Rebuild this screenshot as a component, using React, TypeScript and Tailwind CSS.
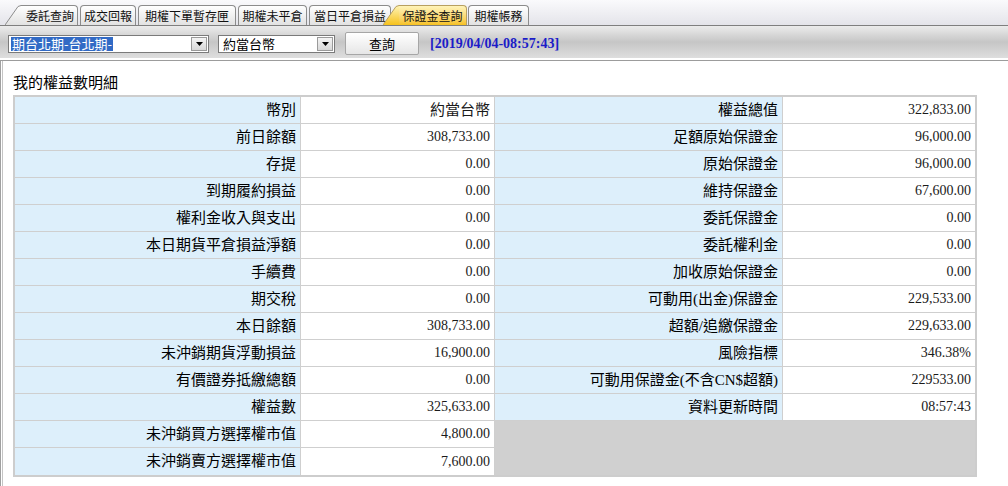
import React from 'react'

const cjk = { fontFamily: '"Liberation Serif", "Noto Sans CJK TC", serif' }
const ui = { fontFamily: '"Noto Sans CJK TC", "Liberation Sans", sans-serif' }

type Row = { l: string; lv: string; r?: string; rv?: string }

const rows: Row[] = [
  { l: '幣別', lv: '約當台幣', r: '權益總值', rv: '322,833.00' },
  { l: '前日餘額', lv: '308,733.00', r: '足額原始保證金', rv: '96,000.00' },
  { l: '存提', lv: '0.00', r: '原始保證金', rv: '96,000.00' },
  { l: '到期履約損益', lv: '0.00', r: '維持保證金', rv: '67,600.00' },
  { l: '權利金收入與支出', lv: '0.00', r: '委託保證金', rv: '0.00' },
  { l: '本日期貨平倉損益淨額', lv: '0.00', r: '委託權利金', rv: '0.00' },
  { l: '手續費', lv: '0.00', r: '加收原始保證金', rv: '0.00' },
  { l: '期交稅', lv: '0.00', r: '可動用(出金)保證金', rv: '229,533.00' },
  { l: '本日餘額', lv: '308,733.00', r: '超額/追繳保證金', rv: '229,633.00' },
  { l: '未沖銷期貨浮動損益', lv: '16,900.00', r: '風險指標', rv: '346.38%' },
  { l: '有價證券抵繳總額', lv: '0.00', r: '可動用保證金(不含CN$超額)', rv: '229533.00' },
  { l: '權益數', lv: '325,633.00', r: '資料更新時間', rv: '08:57:43' },
  { l: '未沖銷買方選擇權市值', lv: '4,800.00' },
  { l: '未沖銷賣方選擇權市值', lv: '7,600.00' },
]

const tabs = [
  { label: '委託查詢', w: 'w-[57px]' },
  { label: '成交回報', w: 'w-[56px]' },
  { label: '期權下單暫存匣', w: 'w-[98px]' },
  { label: '期權未平倉', w: 'w-[69px]' },
  { label: '當日平倉損益', w: 'w-[82px]' },
]

const Slant = ({ active }: { active?: boolean }) => (
  <svg width="16" height="20" viewBox="0 0 16 20" className="block shrink-0">
    <defs>
      <linearGradient id={active ? 'ga' : 'gi'} x1="0" y1="0" x2="0" y2="1">
        <stop offset="0" stopColor={active ? '#fff4b8' : '#ffffff'} />
        <stop offset="1" stopColor={active ? '#f6c21c' : '#e2e2e2'} />
      </linearGradient>
    </defs>
    <polygon points="0,20 13,1.5 16,0.5 16,20" fill={`url(#${active ? 'ga' : 'gi'})`} />
    <polyline points="0,20 13,1.5 16,0.5" fill="none" stroke={active ? '#b8a060' : '#8c8c8c'} strokeWidth="1" />
  </svg>
)

const Combo = ({ w, children }: { w: string; children: React.ReactNode }) => (
  <div className={`${w} h-[18px] flex items-stretch border border-[#7a7a7a] bg-white`}>
    <div className="flex-1 flex items-center pl-[2px] overflow-hidden text-[13px] leading-none whitespace-nowrap" style={ui}>
      {children}
    </div>
    <div className="w-[16px] m-[1px] flex items-center justify-center bg-gradient-to-b from-[#f4f4f4] to-[#d8d8d8] border border-[#9a9a9a]">
      <svg width="7" height="4" viewBox="0 0 7 4"><polygon points="0,0 7,0 3.5,4" fill="#000" /></svg>
    </div>
  </div>
)

export default function App() {
  return (
    <div className="w-[1008px] h-[486px] bg-white overflow-hidden text-black">
      {/* tab strip */}
      <div className="h-[26px] border-b border-[#7f7f7f] bg-gradient-to-b from-[#fafafc] to-[#e4e4ea] flex items-end pl-[5px]" style={ui}>
        {tabs.map((t, i) => (
          <div key={t.label} className={`flex items-end h-[20px] ${i === 0 ? '' : 'ml-[2px]'}`}>
            {i === 0 && <Slant />}
            <div
              className={`${t.w} h-[20px] flex items-center ${i === 0 ? 'pl-[5px] border-l-0 rounded-tl-none' : 'justify-center'} border border-b-0 border-[#8c8c8c] rounded-t-[4px] bg-gradient-to-b from-white to-[#e2e2e2] text-[12px] leading-none text-[#111]`}
            >
              {t.label}
            </div>
          </div>
        ))}
        <div className="relative z-10 flex items-end h-[20px] -ml-[8px]">
          <Slant active />
          <div className="w-[68px] h-[20px] flex items-center justify-center border border-b-0 border-l-0 border-[#b8a060] rounded-tr-[4px] bg-gradient-to-b from-[#fff4b8] to-[#f6c21c] text-[12px] leading-none text-[#111]">
            保證金查詢
          </div>
        </div>
        <div className="ml-[1px] w-[61px] h-[20px] flex items-center justify-center border border-b-0 border-[#8c8c8c] rounded-t-[4px] bg-gradient-to-b from-white to-[#e2e2e2] text-[12px] leading-none text-[#111]">
          期權帳務
        </div>
      </div>

      {/* toolbar */}
      <div className="h-[32px] pt-[3px] flex items-center bg-gradient-to-b from-[#ececec] via-[#c6c6c6] to-[#dedede]">
        <div className="ml-[8px]">
          <Combo w="w-[201px]">
            <span className="bg-[#316ac5] text-white px-[1px] h-[14px] flex items-center">期台北期-台北期-</span>
          </Combo>
        </div>
        <div className="ml-[9px]">
          <Combo w="w-[117px]">
            <span className="pl-[2px]">約當台幣</span>
          </Combo>
        </div>
        <button
          className="ml-[10px] w-[74px] h-[23px] flex items-center justify-center border border-[#a6a6a6] rounded-[2px] bg-gradient-to-b from-white to-[#e6e6e6] text-[13px] leading-none"
          style={ui}
        >
          查詢
        </button>
        <div className="ml-[11px] text-[14px] font-bold text-[#1c1cc8] leading-none" style={{ fontFamily: '"Liberation Serif", serif' }}>
          [2019/04/04-08:57:43]
        </div>
      </div>
      <div className="h-[2px] bg-white" />

      {/* panel */}
      <div className="border-t border-[#9c9c9c] h-[426px] flex">
        <div className="w-[1px] bg-[#a0a0a0]" />
        <div className="w-[1px] bg-white" />
        <div className="w-[1px] bg-[#c4c4c4]" />
        <div className="flex-1 pl-[10px]">
          <div className="h-[34px] flex items-center pt-[11px] text-[15px] leading-none" style={cjk}>
            我的權益數明細
          </div>
          <div className="w-[964px] border-2 border-[#cdcdcd] text-[14px]" style={cjk}>
            {rows.map((r, i) => {
              const last = i === rows.length - 1
              const bb = last ? '' : 'border-b border-[#cfcfcf]'
              return (
                <div key={r.l} className="flex h-[27px]">
                  <div className={`w-[286px] ${bb} border-r border-[#cfcfcf] bg-[#ddeffb] flex items-center justify-end pr-[4px] text-[15px] leading-none`}>
                    {r.l}
                  </div>
                  <div className={`w-[194px] ${bb} border-r border-[#cfcfcf] bg-white flex items-center justify-end pr-[4px] leading-none text-[#1a1a1a] ${i === 0 ? 'text-[15px]' : ''}`}>
                    {r.lv}
                  </div>
                  {r.r ? (
                    <>
                      <div className={`w-[288px] ${bb} border-r border-[#cfcfcf] bg-[#ddeffb] flex items-center justify-end pr-[4px] text-[15px] leading-none`}>
                        {r.r}
                      </div>
                      <div className={`flex-1 ${bb} bg-white flex items-center justify-end pr-[4px] leading-none text-[#1a1a1a]`}>
                        {r.rv}
                      </div>
                    </>
                  ) : (
                    <div className="flex-1 bg-[#d0d0d0]" />
                  )}
                </div>
              )
            })}
          </div>
        </div>
      </div>
    </div>
  )
}
